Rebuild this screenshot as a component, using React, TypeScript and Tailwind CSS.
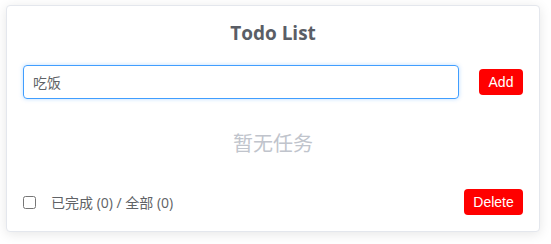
import { useState } from "react";

const cjk = "font-['Open_Sans','Noto_Sans_CJK_SC',sans-serif]";

export default function App() {
  const [text, setText] = useState("吃饭");
  const [done, setDone] = useState(false);

  return (
    <div className={`min-h-screen bg-white pl-[6px] pt-[5px] ${cjk}`}>
      <div className="w-[534px] rounded-[4px] border border-[#e4e7ed] bg-white px-4 pb-4 pt-[13px] shadow-[0_2px_12px_0_rgba(0,0,0,0.1)]">
        <h1 className="mb-[18px] text-center text-[19px] font-bold leading-7 text-[#5a5e66]">Todo List</h1>

        <div className="flex items-center gap-5">
          <input
            value={text}
            onChange={(e) => setText(e.target.value)}
            className="h-[34px] flex-1 rounded-[4px] border border-[#409eff] px-[9px] text-[14px] text-[#606266] shadow-[0_0_4px_rgba(64,158,255,0.35)] outline-none"
          />
          <button className="h-[26px] w-[44px] rounded-[4px] bg-[#ff0000] font-['Liberation_Sans',sans-serif] text-[14px] text-white">
            Add
          </button>
        </div>

        <div className="mb-[33px] mt-[33px] text-center text-[20px] leading-6 text-[#c0c4cc]">暂无任务</div>

        <div className="flex items-center">
          <input
            type="checkbox"
            checked={done}
            onChange={(e) => setDone(e.target.checked)}
            className="h-[13px] w-[13px]"
          />
          <span className="ml-[15px] text-[14px] text-[#606266]">已完成 (0) / 全部 (0)</span>
          <button className="ml-auto h-[26px] w-[59px] rounded-[4px] bg-[#ff0000] font-['Liberation_Sans',sans-serif] text-[14px] text-white">
            Delete
          </button>
        </div>
      </div>
    </div>
  );
}
